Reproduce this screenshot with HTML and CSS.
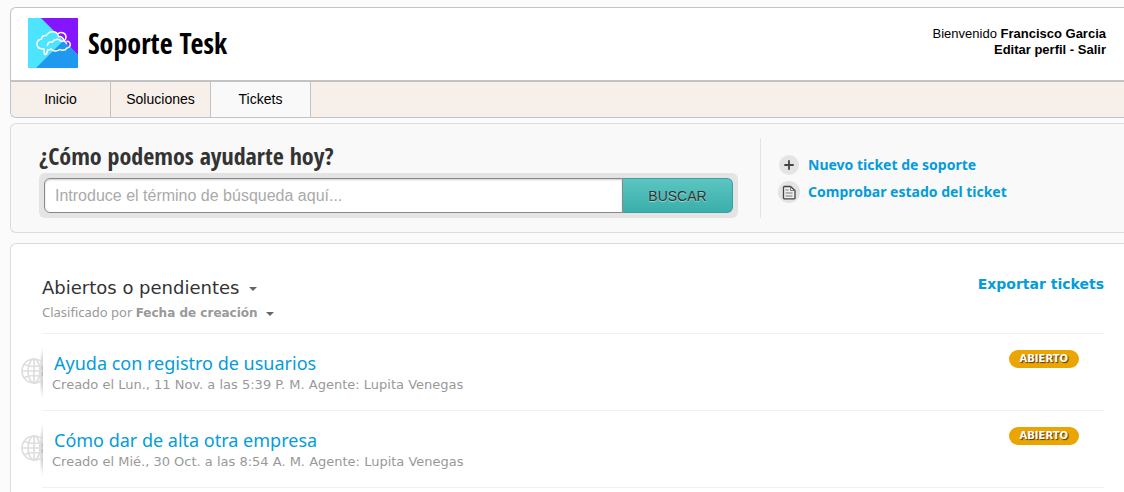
FILE: index.html
```html
<!DOCTYPE html>
<html lang="es">
<head>
    <meta charset="UTF-8">
    <meta name="viewport" content="width=device-width, initial-scale=1.0">
    <title>Soporte Tesk</title>
    <link rel="stylesheet" href="styles.css">
</head>
<body>
    <svg class="sprite" aria-hidden="true">
        <symbol id="globe" viewBox="0 0 26 26">
            <g fill="none" stroke="#dedede" stroke-width="1.7">
                <circle cx="13" cy="13" r="12"/>
                <ellipse cx="13" cy="13" rx="6" ry="12"/>
                <path d="M13 1v24M1 13h24M3.500 6.500q9.500 4 19 0M3.500 19.500q9.500-4 19 0"/>
            </g>
        </symbol>
    </svg>

    <header class="header">
        <div class="header-top">
            <a class="brand" href="#">
                <svg class="logo" viewBox="0 0 50 50" aria-hidden="true">
                    <rect width="50" height="50" fill="#4de4ff"/>
                    <path d="M13 0H50V37z" fill="#8316ff"/>
                    <path d="M8 50L35.500 22.500 50 37V50z" fill="#1f98f0"/>
                    <g fill="none" stroke="#fff" stroke-width="1.500" stroke-linecap="round" stroke-linejoin="round">
                        <path d="M36 22.500C35 19.500 33 18 30.500 18.500 30 15.500 27.500 13.700 24.500 13.700c-3 0-5 1.500-6 3.800-3-.5-5 1-5 3.500-3 .5-4.500 2.500-4.500 5 0 3 2.300 4.800 5.500 4.800l1.500.2.500 5.500c1.500.3 2.300-.5 2.600-2l.6-2.700c1.300.2 2.300-.2 3.300-1 1.500 2.500 6 3 8.500.7 3 1.200 6 .5 7.500-1.500 2.500-.3 3.500-2 3.200-4-.3-1.800-1.500-2.700-3.200-2.800"/>
                        <path d="M19.500 27.200c0-2.500 2.500-4 4.800-2.900 1.500-3.500 6.700-4 9-.8 2.500-1 4.500 0 5.200 2"/>
                        <path d="M30.500 15.300c3-2 7.500 0 7.500 3.700 0 1.700-.6 2.800-1.500 3.500"/>
                    </g>
                </svg>
                <span class="brand-name">Soporte Tesk</span>
            </a>
            <div class="user">
                <div>Bienvenido <b>Francisco Garcia</b></div>
                <div><a href="#">Editar perfil</a> <b>-</b> <a href="#">Salir</a></div>
            </div>
        </div>
        <nav class="nav">
            <a class="tab" href="#">Inicio</a>
            <a class="tab" href="#">Soluciones</a>
            <a class="tab active" href="#">Tickets</a>
        </nav>
    </header>

    <section class="help">
        <div class="help-main">
            <h1><label for="search">¿Cómo podemos ayudarte hoy?</label></h1>
            <form class="search">
                <input type="text" id="search" placeholder="Introduce el término de búsqueda aquí...">
                <button type="submit">BUSCAR</button>
            </form>
        </div>
        <div class="help-links">
            <a href="#">
                <svg viewBox="0 0 22 22" aria-hidden="true">
                    <circle cx="11" cy="11" r="10" fill="#e4e4e4"/>
                    <path d="M11 6.300v9.400M6.300 11h9.400" stroke="#444" stroke-width="1.800"/>
                </svg>
                Nuevo ticket de soporte
            </a>
            <a href="#">
                <svg viewBox="0 0 22 22" aria-hidden="true">
                    <circle cx="11" cy="11" r="11" fill="#e4e4e4"/>
                    <path d="M6.500 5.500h6l4.500 4V17a.8.8 0 0 1-.8.800H6.300a.8.8 0 0 1-.8-.8V6.500a1 1 0 0 1 1-1z" fill="#eee" stroke="#444" stroke-width="1.300"/>
                    <path d="M12.500 5.500v4H17M7.500 9h3M7.500 12h7M7.500 15h7" fill="none" stroke="#777"/>
                </svg>
                Comprobar estado del ticket
            </a>
        </div>
    </section>

    <main class="tickets">
        <div class="tickets-head">
            <div>
                <h2><button type="button" class="dropdown">Abiertos o pendientes <span class="caret"></span></button></h2>
                <div class="sort">Clasificado por <button type="button" class="dropdown">Fecha de creación <span class="caret"></span></button></div>
            </div>
            <a class="export" href="#">Exportar tickets</a>
        </div>
        <ul class="list">
            <li class="ticket">
                <div class="source"><svg aria-hidden="true"><use href="#globe"/></svg></div>
                <div class="info">
                    <a class="subject" href="#">Ayuda con registro de usuarios</a>
                    <div class="meta">Creado el Lun., 11 Nov. a las 5:39 P. M. Agente: Lupita Venegas</div>
                </div>
                <span class="status">ABIERTO</span>
            </li>
            <li class="ticket">
                <div class="source"><svg aria-hidden="true"><use href="#globe"/></svg></div>
                <div class="info">
                    <a class="subject" href="#">Cómo dar de alta otra empresa</a>
                    <div class="meta">Creado el Mié., 30 Oct. a las 8:54 A. M. Agente: Lupita Venegas</div>
                </div>
                <span class="status">ABIERTO</span>
            </li>
        </ul>
    </main>
</body>
</html>
```

FILE: styles.css
```css
:root {
    --link: #049cdb;
    --border: #c3c3c3;
    --light-border: #dcdcdc;
    --nav: #f7efe9;
    --muted: #999;
}

* {
    margin: 0;
    padding: 0;
    box-sizing: border-box;
}

body {
    display: flex;
    flex-direction: column;
    min-height: 100vh;
    font-family: "Liberation Sans", Arial, sans-serif;
    font-size: 14px;
    color: #000;
    background: #fbfbfb;
    padding: 7px 0 0 10px;
}

a {
    color: inherit;
    text-decoration: none;
}

.sprite {
    display: none;
}

/* Header */
.header {
    background: #fff;
    border: 1px solid var(--border);
    border-right: none;
    border-radius: 6px 0 0 6px;
    overflow: hidden;
}

.header-top {
    display: flex;
    justify-content: space-between;
    padding: 10px 18px 12px 17px;
}

.brand {
    display: flex;
    align-items: center;
    gap: 10px;
}

.logo {
    width: 50px;
    height: 50px;
}

.brand-name,
h1 {
    font-family: "Open Sans Condensed", "Liberation Sans Narrow", "Open Sans", sans-serif;
    font-weight: 700;
}

.brand-name {
    font-size: 28px;
}

.user {
    font-size: 13px;
    line-height: 16px;
    padding-top: 8px;
    text-align: right;
}

.user a {
    font-weight: 700;
}

.nav {
    display: flex;
    background: var(--nav);
    border-top: 2px solid var(--border);
}

.tab {
    width: 100px;
    line-height: 35px;
    text-align: center;
    border-right: 1px solid var(--border);
}

.tab.active {
    background: #f9f9f9;
}

/* Search */
.help {
    display: flex;
    gap: 22px;
    margin-top: 5px;
    padding: 14px 0 14px 28px;
    background: #f9f9f9;
    border: 1px solid var(--light-border);
    border-right: none;
    border-radius: 6px 0 0 6px;
}

.help-main {
    flex: 1;
}

h1 {
    font-size: 24px;
    line-height: 35px;
    color: #333;
}

.search {
    display: flex;
    padding: 5px;
    background: #e4e4e4;
    border-radius: 6px;
}

.search input {
    flex: 1;
    min-width: 0;
    height: 35px;
    padding: 0 10px;
    font: 16px "Liberation Sans", Arial, sans-serif;
    background: #fff;
    border: 1px solid #888;
    border-radius: 6px 0 0 6px;
    box-shadow: inset 0 1px 2px rgba(0, 0, 0, 0.2);
}

.search input::placeholder {
    color: #aaa;
}

.search button {
    width: 110px;
    font: 14px "Liberation Sans", Arial, sans-serif;
    color: #333;
    text-shadow: 0 1px 1px rgba(255, 255, 255, 0.5);
    background: linear-gradient(#5bc5c1, #3aafab);
    border: 1px solid #3a9f9b;
    border-left: none;
    border-radius: 0 6px 6px 0;
}

.help-links {
    display: flex;
    flex-direction: column;
    gap: 5px;
    width: 364px;
    padding: 16px 0 0 17px;
    border-left: 1px solid #e4e4e4;
}

.help-links a {
    display: flex;
    align-items: center;
    gap: 8px;
    font: 700 14px/22px "Noto Sans", sans-serif;
    color: var(--link);
}

.help-links svg {
    width: 22px;
    height: 22px;
}

/* Ticket list */
.tickets {
    flex: 1;
    margin-top: 10px;
    padding: 30px 20px 0 31px;
    background: #fff;
    border: 1px solid var(--light-border);
    border-right: none;
    border-bottom: none;
    border-radius: 6px 0 0 0;
    font-family: "DejaVu Sans", Verdana, sans-serif;
}

.tickets-head {
    display: flex;
    justify-content: space-between;
    padding-bottom: 10px;
    border-bottom: 1px solid #f0f0f0;
}

.dropdown {
    font: inherit;
    color: inherit;
    background: none;
    border: none;
}

.caret {
    display: inline-block;
    margin-left: 4px;
    vertical-align: middle;
    border: 4px solid transparent;
    border-top-color: #666;
    border-bottom: none;
}

h2 {
    font-size: 18px;
    font-weight: 400;
    line-height: 28px;
    color: #333;
}

.sort {
    font: 13px/20px "Noto Sans", sans-serif;
    color: var(--muted);
}

.sort .dropdown {
    font: 700 12px/20px "DejaVu Sans", Verdana, sans-serif;
}

.export {
    font-size: 14px;
    font-weight: 700;
    line-height: 20px;
    color: var(--link);
}

.list {
    list-style: none;
}

.ticket {
    display: flex;
    align-items: flex-start;
    height: 77px;
    border-bottom: 1px solid #f0f0f0;
}

/* The globe hangs out to the left and slides under the row's edge shadow */
.source {
    width: 22px;
    height: 54px;
    margin: 12px 0 0 -21px;
    padding-top: 12px;
    overflow: hidden;
    background: radial-gradient(ellipse at right, rgba(0, 0, 0, 0.3), transparent 70%) right / 4px 100% no-repeat;
}

.source svg {
    width: 26px;
    height: 26px;
}

.info {
    flex: 1;
    padding: 16px 0 0 9px;
}

.subject {
    display: block;
    margin-left: 2px;
    font: 18px/26px "Noto Sans", sans-serif;
    color: var(--link);
}

.meta {
    font-size: 13px;
    line-height: 18px;
    color: var(--muted);
}

.status {
    margin: 16px 25px 0 0;
    padding: 0 11px;
    font-size: 10px;
    font-weight: 700;
    line-height: 18px;
    color: #fff;
    text-shadow: 1px 1px 1px rgba(0, 0, 0, 0.7);
    background: #eba500;
    border-radius: 9px;
}
```
